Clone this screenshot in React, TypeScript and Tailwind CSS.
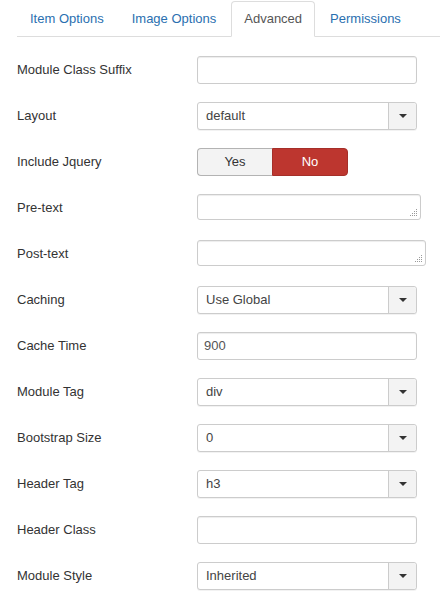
const TABS = ['Item Options', 'Image Options', 'Advanced', 'Permissions'];

type Field =
  | { label: string; kind: 'text'; value?: string }
  | { label: string; kind: 'select'; value: string }
  | { label: string; kind: 'toggle' }
  | { label: string; kind: 'area'; width: string };

const FIELDS: Field[] = [
  { label: 'Module Class Suffix', kind: 'text' },
  { label: 'Layout', kind: 'select', value: 'default' },
  { label: 'Include Jquery', kind: 'toggle' },
  { label: 'Pre-text', kind: 'area', width: 'w-[224px]' },
  { label: 'Post-text', kind: 'area', width: 'w-[229px]' },
  { label: 'Caching', kind: 'select', value: 'Use Global' },
  { label: 'Cache Time', kind: 'text', value: '900' },
  { label: 'Module Tag', kind: 'select', value: 'div' },
  { label: 'Bootstrap Size', kind: 'select', value: '0' },
  { label: 'Header Tag', kind: 'select', value: 'h3' },
  { label: 'Header Class', kind: 'text' },
  { label: 'Module Style', kind: 'select', value: 'Inherited' },
];

const Grip = () => (
  <svg className="absolute right-[3px] bottom-[3px]" width="7" height="7" viewBox="0 0 7 7">
    {[
      [6, 0], [6, 2], [4, 2], [6, 4], [4, 4], [2, 4], [6, 6], [4, 6], [2, 6], [0, 6],
    ].map(([x, y], i) => (
      <rect key={i} x={x} y={y} width="1" height="1" fill="#9a9a9a" />
    ))}
  </svg>
);

const Control = ({ field }: { field: Field }) => {
  if (field.kind === 'text') {
    return (
      <div className="w-[220px] h-[28px] border border-[#cccccc] rounded-[3px] bg-white shadow-[inset_0_1px_1px_rgba(0,0,0,0.075)] flex items-center px-[6px] text-[13px] text-[#555]">
        {field.value}
      </div>
    );
  }
  if (field.kind === 'select') {
    return (
      <div className="w-[220px] h-[28px] border border-[#cccccc] rounded-[3px] bg-white flex text-[13px] text-[#444] shadow-[0_1px_0_rgba(0,0,0,0.05)]">
        <div className="flex-1 flex items-center px-[8px]">{field.value}</div>
        <div className="w-[28px] border-l border-[#cccccc] bg-[#f3f3f3] rounded-r-[3px] flex items-center justify-center">
          <div className="w-0 h-0 border-l-[4px] border-r-[4px] border-t-[4px] border-l-transparent border-r-transparent border-t-[#333]" />
        </div>
      </div>
    );
  }
  if (field.kind === 'toggle') {
    return (
      <div className="flex h-[28px] text-[13px]">
        <div className="w-[75px] flex items-center justify-center bg-[#f3f3f3] border border-[#b3b3b3] border-r-0 rounded-l-[4px] text-[#333]">
          Yes
        </div>
        <div className="w-[76px] flex items-center justify-center bg-[#bd362f] border border-[#a52f29] rounded-r-[4px] text-white">
          No
        </div>
      </div>
    );
  }
  return (
    <div className={`${field.width} self-start relative h-[26px] border border-[#cccccc] rounded-[3px] bg-white shadow-[inset_0_1px_1px_rgba(0,0,0,0.075)]`}>
      <Grip />
    </div>
  );
};

export default function App() {
  return (
    <div className="w-[440px] h-[603px] bg-white overflow-hidden font-['Liberation_Sans',Arial,sans-serif] text-[13px] text-[#333]">
      <div className="pt-px pl-[17px]">
        <div className="flex border-b border-[#dddddd]">
          {TABS.map((tab) => {
            const active = tab === 'Advanced';
            return (
              <div
                key={tab}
                className={
                  active
                    ? 'mr-[2px] -mb-px px-[12px] py-[8px] leading-[18px] border border-[#dddddd] border-b-white rounded-t-[4px] bg-white text-[#555]'
                    : 'mr-[2px] -mb-px px-[12px] py-[8px] leading-[18px] border border-transparent text-[#2a6fb0]'
                }
              >
                {tab}
              </div>
            );
          })}
        </div>
      </div>
      <div className="pt-[19px] pl-[17px] flex flex-col gap-[18px]">
        {FIELDS.map((field) => (
          <div key={field.label} className="flex items-center h-[28px]">
            <div className="w-[180px] shrink-0">{field.label}</div>
            <Control field={field} />
          </div>
        ))}
      </div>
    </div>
  );
}
